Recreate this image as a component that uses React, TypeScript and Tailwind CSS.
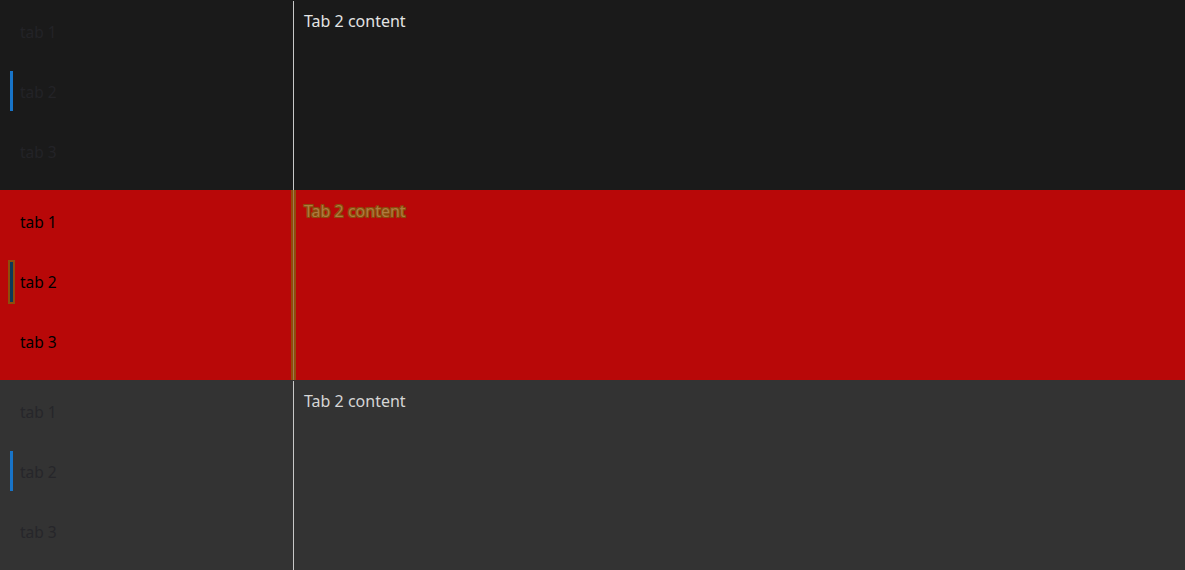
import React from "react";

type Variant = "dark" | "red" | "gray";

function Panel({ variant }: { variant: Variant }) {
  const bg =
    variant === "dark" ? "bg-[#1a1a1a]" : variant === "red" ? "bg-[#b80808]" : "bg-[#333333]";
  const tabText =
    variant === "red" ? "text-[#000000]" : variant === "dark" ? "text-[#232327]" : "text-[#26262a]";
  const tabs = ["tab 1", "tab 2", "tab 3"];
  return (
    <div className={`flex h-[190px] w-full ${bg}`} style={{ fontFamily: '"Noto Sans", "Open Sans", sans-serif' }}>
      <div className="flex w-[293px] shrink-0 flex-col pt-[1px]">
        {tabs.map((t, i) => (
          <div key={t} className="relative flex h-[60px] items-center pl-[20px] pt-[3px] text-[15.5px]">
            {i === 1 &&
              (variant === "red" ? (
                <div className="absolute left-[8px] top-[9px] h-[44px] w-[7px] border-2 border-[#8f4d0c] bg-[#0c3a58]" />
              ) : (
                <div className="absolute left-[10px] top-[10px] h-[40px] w-[3px] bg-[#1874c8]" />
              ))}
            <span className={tabText}>{t}</span>
          </div>
        ))}
      </div>
      {variant === "red" ? (
        <div className="ml-[-2px] flex w-[5px] shrink-0 justify-center bg-[#8f4d0c]">
          <div className="w-[1px] bg-[#a07a50]" />
        </div>
      ) : (
        <div className="mt-[1px] w-[1px] shrink-0 bg-[#c8c8c8]" />
      )}
      <div className={`flex-1 pt-[10px] ${variant === "red" ? "pl-[8px]" : "pl-[10px]"} text-[16px] leading-[22px]`}>
        {variant === "red" ? (
          <span
            className="text-[#b07a40]"
            style={{
              textShadow:
                "1px 0 0 #8a4c0c, -1px 0 0 #8a4c0c, 0 1px 0 #8a4c0c, 0 -1px 0 #8a4c0c, 1px 1px 0 #8a4c0c, -1px -1px 0 #8a4c0c, 1px -1px 0 #8a4c0c, -1px 1px 0 #8a4c0c",
            }}
          >
            Tab 2 content
          </span>
        ) : (
          <span className={variant === "dark" ? "text-[#e4e4e4]" : "text-[#d6d6d6]"}>Tab 2 content</span>
        )}
      </div>
    </div>
  );
}

export default function App() {
  return (
    <div className="flex h-[570px] w-[1185px] flex-col overflow-hidden">
      <Panel variant="dark" />
      <Panel variant="red" />
      <Panel variant="gray" />
    </div>
  );
}
